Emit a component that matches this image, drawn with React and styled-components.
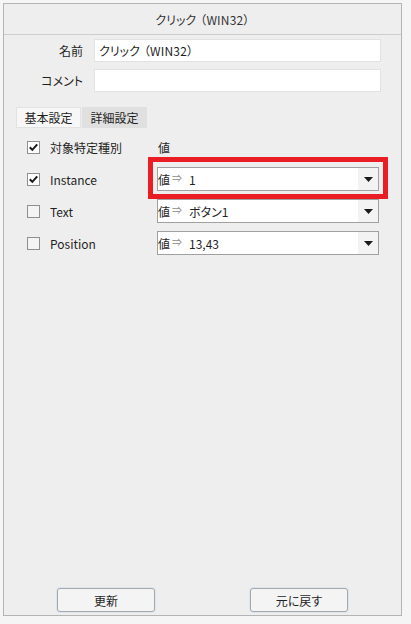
import React from 'react';
import styled, { createGlobalStyle } from 'styled-components';

const GlobalStyle = createGlobalStyle`
  html, body {
    margin: 0;
    padding: 0;
    background: #f5f5f5;
  }
  body {
    font-family: "Noto Sans CJK JP", "Noto Sans", sans-serif;
    font-size: 12px;
    color: #1f1f1f;
    font-feature-settings: "palt";
  }
`;

const rows = [
  { name: '対象特定種別', checked: true, header: true },
  { name: 'Instance', checked: true, value: '1', highlight: true },
  { name: 'Text', checked: false, value: 'ボタン1' },
  { name: 'Position', checked: false, value: '13,43' },
];

function CheckMark() {
  return (
    <svg width="11" height="11" viewBox="0 0 11 11">
      <polyline points="1.8,5.3 4.3,7.9 9.2,2.4" fill="none" stroke="#1a1a1a" strokeWidth="2" />
    </svg>
  );
}

function App() {
  return (
    <>
      <GlobalStyle />
      <Panel>
        <Header>クリック<Paren>（WIN32）</Paren></Header>
        <Body>
          <FieldRow>
            <Label>名前</Label>
            <TextBox>クリック<Paren>（WIN32）</Paren></TextBox>
          </FieldRow>
          <FieldRow>
            <Label>コメント</Label>
            <TextBox />
          </FieldRow>

          <Tabs>
            <Tab active>基本設定</Tab>
            <Tab>詳細設定</Tab>
          </Tabs>

          <Grid>
            {rows.map((row) => (
              <Row key={row.name}>
                <Check checked={row.checked}>{row.checked && <CheckMark />}</Check>
                <RowName>{row.name}</RowName>
                {row.header ? (
                  <ColumnHead>値</ColumnHead>
                ) : (
                  <Combo>
                    <ComboText>
                      <span>値</span>
                      <Arrow>⇒</Arrow>
                      <Value>{row.value}</Value>
                    </ComboText>
                    <DropButton>
                      <svg width="9" height="5" viewBox="0 0 9 5">
                        <polygon points="0,0 9,0 4.5,5" fill="#1a1a1a" />
                      </svg>
                    </DropButton>
                    {row.highlight && <RedFrame />}
                  </Combo>
                )}
              </Row>
            ))}
          </Grid>
        </Body>
        <Footer>
          <Button>更新</Button>
          <Button>元に戻す</Button>
        </Footer>
      </Panel>
    </>
  );
}

const Panel = styled.div`
  margin: 3px 0 0 3px;
  width: 397px;
  height: 611px;
  border: 1px solid #b4b4b4;
  background: #eeeeee;
  display: flex;
  flex-direction: column;
`;
const Header = styled.div`
  height: 30px;
  border-bottom: 1px solid #cdcdcd;
  display: flex;
  align-items: center;
  justify-content: center;
  color: #333;
`;
const Paren = styled.span`
  margin-left: 4px;
  letter-spacing: 0.2px;
`;
const Body = styled.div`
  flex: 1;
  padding-top: 4px;
`;
const FieldRow = styled.div`
  display: flex;
  align-items: center;
  margin-bottom: 7px;
`;
const Label = styled.div`
  width: 90px;
  text-align: right;
  padding-right: 11px;
  box-sizing: border-box;
`;
const TextBox = styled.div`
  width: 287px;
  height: 23px;
  box-sizing: border-box;
  background: #fff;
  border: 1px solid #e2e2e2;
  padding-left: 4px;
  display: flex;
  align-items: center;
`;
const Tabs = styled.div`
  display: flex;
  gap: 1px;
  margin: 15px 0 0 12px;
`;
const Tab = styled.div`
  width: 65px;
  height: 21px;
  box-sizing: border-box;
  display: flex;
  align-items: center;
  justify-content: center;
  background: ${(p) => (p.active ? '#f7f7f7' : '#e0e0e0')};
  border: 1px solid ${(p) => (p.active ? '#e2e2e2' : '#e0e0e0')};
`;
const Grid = styled.div`
  display: flex;
  flex-direction: column;
  gap: 8px;
  margin-top: 7px;
  padding-left: 23px;
`;
const Row = styled.div`
  display: flex;
  align-items: center;
  height: 24px;
`;
const Check = styled.div`
  width: 13px;
  height: 13px;
  box-sizing: border-box;
  border: 1px solid #8f8f8f;
  background: ${(p) => (p.checked ? '#fff' : '#f4f4f4')};
  display: flex;
  align-items: center;
  justify-content: center;
`;
const RowName = styled.div`
  width: 107px;
  margin-left: 10px;
`;
const ColumnHead = styled.div`
  padding-left: 1px;
`;
const Combo = styled.div`
  position: relative;
  width: 222px;
  height: 24px;
  box-sizing: border-box;
  border: 1px solid #a0a0a0;
  background: #fff;
  display: flex;
`;
const ComboText = styled.div`
  flex: 1;
  display: flex;
  align-items: center;
`;
const Arrow = styled.span`
  color: #8a8a8a;
  font-size: 10px;
  margin: 0 0 3px 2px;
`;
const Value = styled.span`
  margin-left: 7px;
`;
const DropButton = styled.div`
  width: 20px;
  background: #f3f3f3;
  display: flex;
  align-items: center;
  justify-content: center;
`;
const RedFrame = styled.div`
  position: absolute;
  left: -10px;
  right: -10px;
  top: -11px;
  bottom: -9px;
  border: 5px solid #ea1c24;
  pointer-events: none;
`;
const Footer = styled.div`
  display: flex;
  gap: 95px;
  padding: 0 0 3px 53px;
`;
const Button = styled.div`
  width: 98px;
  height: 24px;
  box-sizing: border-box;
  border: 1px solid #a8a8a8;
  border-radius: 3px;
  background: #f4f4f4;
  box-shadow: 0 0 0 1px #dbe6f3;
  display: flex;
  align-items: center;
  justify-content: center;
`;

export default App;
